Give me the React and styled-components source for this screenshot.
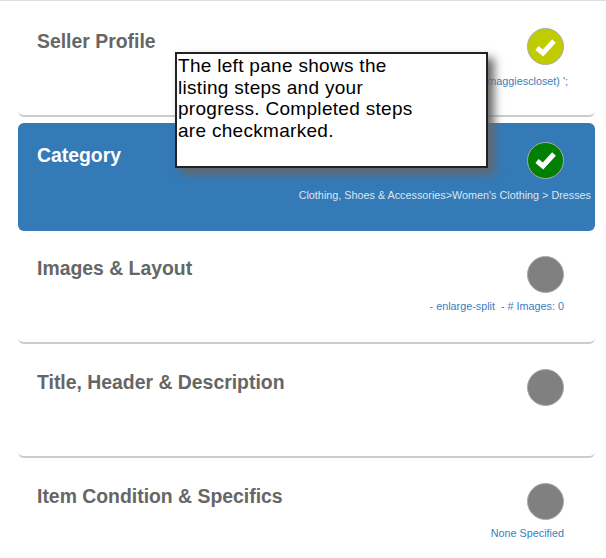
import styled, { createGlobalStyle } from 'styled-components';

const GlobalStyle = createGlobalStyle`
    html, body {
        margin: 0;
        padding: 0;
        background: #fff;
    }
    body {
        font-family: "Liberation Sans", Arial, sans-serif;
    }
`;

const Page = styled.div`
    position: relative;
    width: 606px;
    height: 558px;
    overflow: hidden;
    box-sizing: border-box;
    border-top: 1px solid #ddd;
`;

const Steps = styled.div`
    display: flex;
    flex-direction: column;
    gap: 6px;
    margin: 8px 11px 0 18px;
`;

const Step = styled.div`
    display: flex;
    justify-content: space-between;
    box-sizing: border-box;
    height: 107.75px;
    padding: 19px 31px 0 19px;
    border-radius: 6px;
    background: ${({ $active }) => ($active ? '#337ab7' : '#fff')};
    border-bottom: ${({ $active }) => ($active ? 'none' : '2px solid #ccc')};
`;

const Title = styled.h2`
    margin: 1.8px 0 0;
    font-size: 19.4px;
    line-height: 22px;
    font-weight: 700;
    color: ${({ $active }) => ($active ? '#fff' : '#666')};
`;

const Status = styled.div`
    display: flex;
    flex-direction: column;
    align-items: flex-end;
`;

const Circle = styled.div`
    display: flex;
    align-items: center;
    justify-content: center;
    box-sizing: border-box;
    width: 37px;
    height: 37px;
    border-radius: 50%;
    border: 1px solid #aaa;
    background: ${({ $color }) => $color};
`;

const Meta = styled.div`
    margin-top: ${({ $lower }) => ($lower ? 10 : 7)}px;
    margin-right: ${({ $shift }) => $shift || 0}px;
    font-size: 10.8px;
    line-height: 12px;
    white-space: pre;
    color: ${({ $active }) => ($active ? '#dde6f0' : '#3a80c0')};
`;

const Callout = styled.div`
    position: absolute;
    left: 175px;
    top: 51px;
    box-sizing: border-box;
    width: 313px;
    height: 116px;
    padding: 1px 60px 0 1px;
    border: 2px solid #222;
    background: #fff;
    box-shadow: 6px 6px 9px #666;
    color: #000;
    font-size: 19px;
    line-height: 21.7px;
    letter-spacing: 0.3px;
`;

const Check = () => (
    <svg width="23" height="20" viewBox="0 0 23 20">
        <path d="M3 11 L9 16 L20 4" fill="none" stroke="#fff" strokeWidth="5" />
    </svg>
);

const steps = [
    { title: 'Seller Profile', color: '#bfcc00', done: true, lower: true, meta: "maggiescloset) ';", shift: -4 },
    { title: 'Category', color: '#008000', done: true, active: true, lower: true, meta: "Clothing, Shoes & Accessories>Women's Clothing > Dresses", shift: -27 },
    { title: 'Images & Layout', color: '#808080', meta: '- enlarge-split  - # Images: 0' },
    { title: 'Title, Header & Description', color: '#808080', meta: '' },
    { title: 'Item Condition & Specifics', color: '#808080', meta: 'None Specified' },
];

export default function App() {
    return (
        <Page>
            <GlobalStyle />
            <Steps>
                {steps.map((step) => (
                    <Step key={step.title} $active={step.active}>
                        <Title $active={step.active}>{step.title}</Title>
                        <Status>
                            <Circle $color={step.color}>{step.done && <Check />}</Circle>
                            <Meta $active={step.active} $lower={step.lower} $shift={step.shift}>{step.meta}</Meta>
                        </Status>
                    </Step>
                ))}
            </Steps>
            <Callout>
                The left pane shows the listing steps and your progress. Completed steps are checkmarked.
            </Callout>
        </Page>
    );
}
